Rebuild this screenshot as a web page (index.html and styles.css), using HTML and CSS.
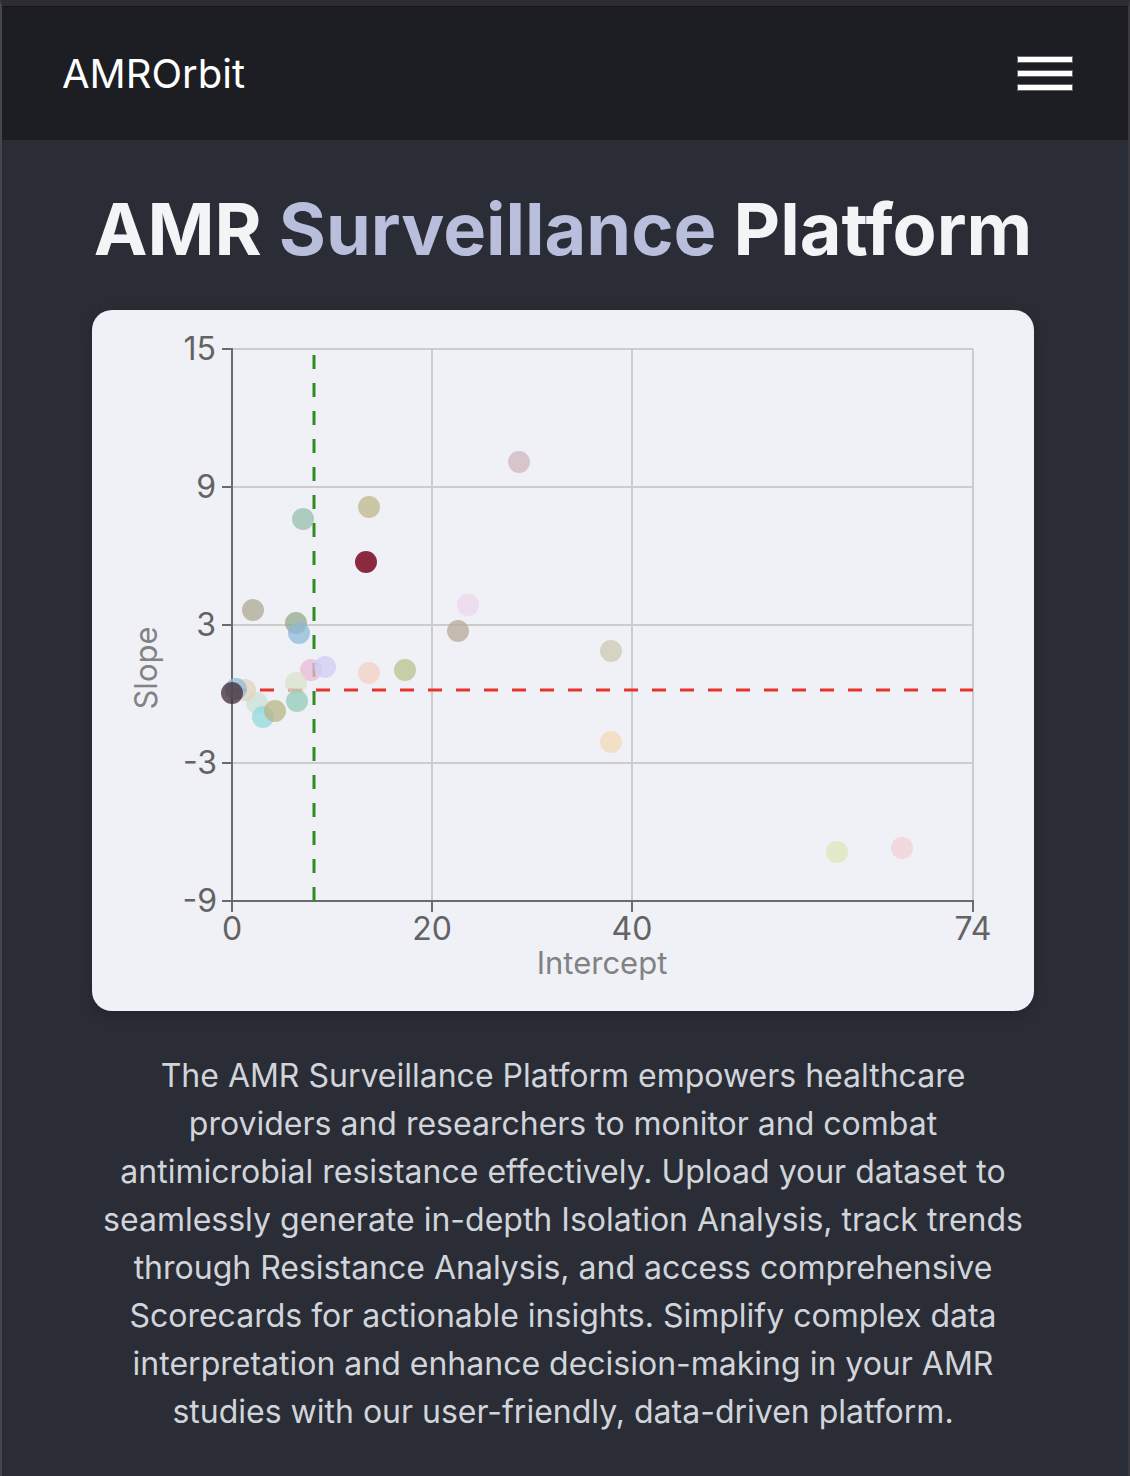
FILE: index.html
```html
<!DOCTYPE html>
<html lang="en">
<head>
<meta charset="utf-8">
<title>AMROrbit</title>
<link rel="stylesheet" href="styles.css">
</head>
<body>
<div class="frame">
  <header class="topbar">
    <span class="brand">AMROrbit</span>
    <button class="menu" aria-label="Menu"><span></span><span></span><span></span></button>
  </header>
  <main class="hero">
    <h1 class="title">AMR <span class="accent">Surveillance</span> Platform</h1>
    <div class="chart-card">
      <svg class="chart" width="942" height="701" viewBox="0 0 942 701">
        <g class="grid">
          <line x1="340" y1="39" x2="340" y2="591"/>
          <line x1="540" y1="39" x2="540" y2="591"/>
          <line x1="881" y1="39" x2="881" y2="591"/>
          <line x1="140" y1="39" x2="881" y2="39"/>
          <line x1="140" y1="177" x2="881" y2="177"/>
          <line x1="140" y1="315" x2="881" y2="315"/>
          <line x1="140" y1="453" x2="881" y2="453"/>
        </g>
        <g class="axis">
          <line x1="140" y1="38" x2="140" y2="592"/>
          <line x1="139" y1="591" x2="882" y2="591"/>
          <line x1="130" y1="39" x2="140" y2="39"/>
          <line x1="130" y1="177" x2="140" y2="177"/>
          <line x1="130" y1="315" x2="140" y2="315"/>
          <line x1="130" y1="453" x2="140" y2="453"/>
          <line x1="130" y1="591" x2="140" y2="591"/>
          <line x1="140" y1="591" x2="140" y2="602"/>
          <line x1="340" y1="591" x2="340" y2="602"/>
          <line x1="540" y1="591" x2="540" y2="602"/>
          <line x1="881" y1="591" x2="881" y2="602"/>
        </g>
        <g class="ticks-y">
          <text x="124" y="50">15</text>
          <text x="124" y="188">9</text>
          <text x="124" y="326">3</text>
          <text x="125" y="464">-3</text>
          <text x="125" y="602">-9</text>
        </g>
        <g class="ticks-x">
          <text x="140" y="630">0</text>
          <text x="340" y="630">20</text>
          <text x="540" y="630">40</text>
          <text x="881" y="630">74</text>
        </g>
        <text class="axis-label" x="510" y="664">Intercept</text>
        <text class="axis-label" transform="translate(65 358) rotate(-90)">Slope</text>
        <line class="ref-h" x1="140" y1="380" x2="881" y2="380"/>
        <line class="ref-v" x1="222" y1="591" x2="222" y2="42"/>
        <g class="points">
          <circle cx="427" cy="152" r="11" fill="#d0b6be"/>
          <circle cx="277" cy="197" r="11" fill="#bfb88b"/>
          <circle cx="211" cy="209" r="11" fill="#98beac"/>
          <circle cx="161" cy="300" r="11" fill="#acaa92"/>
          <circle cx="376" cy="295" r="11" fill="#ecd5ec"/>
          <circle cx="204" cy="313" r="11" fill="#91a98a"/>
          <circle cx="207" cy="323" r="11" fill="#8db9d8"/>
          <circle cx="366" cy="321" r="11" fill="#b7a997"/>
          <circle cx="519" cy="341" r="11" fill="#ccc9b3"/>
          <circle cx="313" cy="360" r="11" fill="#b8c18e"/>
          <circle cx="277" cy="363" r="11" fill="#f1d0c3"/>
          <circle cx="219" cy="360" r="11" fill="#ebbad7"/>
          <circle cx="233" cy="357" r="11" fill="#d0ccf4"/>
          <circle cx="204" cy="373" r="11" fill="#d9e1ca"/>
          <circle cx="205" cy="391" r="11" fill="#91cab8"/>
          <circle cx="165" cy="393" r="11" fill="#c9e2d4"/>
          <circle cx="171" cy="407" r="11" fill="#91dadc"/>
          <circle cx="183" cy="401" r="11" fill="#b7b586"/>
          <circle cx="153" cy="380" r="11" fill="#e3d2bc"/>
          <circle cx="144" cy="379" r="11" fill="#8fbdd8"/>
          <circle cx="140" cy="383" r="11" fill="#3f2932"/>
          <circle cx="519" cy="432" r="11" fill="#f3d9b6"/>
          <circle cx="745" cy="542" r="11" fill="#dde5b8"/>
          <circle cx="810" cy="538" r="11" fill="#f1d0d4"/>
          <circle class="focus" cx="274" cy="252" r="11" fill="#8b2a3f"/>
        </g>
      </svg>
    </div>
    <p class="intro">The AMR Surveillance Platform empowers healthcare providers and researchers to monitor and combat antimicrobial resistance effectively. Upload your dataset to seamlessly generate in-depth Isolation Analysis, track trends through Resistance Analysis, and access comprehensive Scorecards for actionable insights. Simplify complex data interpretation and enhance decision-making in your AMR studies with our user-friendly, data-driven platform.</p>
  </main>
</div>
</body>
</html>
```

FILE: styles.css
```css
html, body {
  margin: 0;
  padding: 0;
  background: #2a2d35;
}

.frame {
  box-sizing: border-box;
  min-height: 1476px;
  border-top: 6px solid #2d2c35;
  border-left: 2px solid #45454b;
  border-right: 2px solid #3a3a40;
  background: #2a2d35;
  font-family: Inter, "Noto Sans", sans-serif;
}

.topbar {
  box-sizing: border-box;
  height: 134px;
  border-top: 1px solid #141518;
  background: #1c1e23;
  display: flex;
  align-items: center;
  justify-content: space-between;
  padding: 0 56px 0 60px;
}

.brand {
  color: #ffffff;
  font-size: 40px;
  font-weight: 400;
}

.menu {
  display: flex;
  flex-direction: column;
  gap: 9px;
  padding: 0;
  margin: 0;
  border: 0;
  background: transparent;
  cursor: pointer;
}

.menu span {
  display: block;
  width: 54px;
  height: 5px;
  background: #ffffff;
  box-shadow: 0 0 0 1px rgba(150, 150, 155, 0.6);
}

.hero {
  display: flex;
  flex-direction: column;
  align-items: center;
  padding: 53px 4px 0 0;
}

.title {
  margin: 0;
  font-size: 72px;
  line-height: 72px;
  font-weight: 700;
  color: #f3f4f6;
  white-space: nowrap;
}

.accent {
  color: #b9bedc;
}

.chart-card {
  margin-top: 45px;
  width: 942px;
  height: 701px;
  border-radius: 20px;
  background: #f0f1f7;
  box-shadow: 0 4px 14px rgba(0, 0, 0, 0.18);
  overflow: hidden;
}

.chart {
  display: block;
  font-family: Inter, "Noto Sans", sans-serif;
}

.grid line {
  stroke: #cccccc;
  stroke-width: 2;
}

.axis line {
  stroke: #6b6b6b;
  stroke-width: 2;
}

.ticks-y text,
.ticks-x text {
  font-size: 32px;
  fill: #636363;
}

.ticks-y text {
  text-anchor: end;
}

.ticks-x text {
  text-anchor: middle;
}

.axis-label {
  font-size: 31px;
  fill: #828282;
  text-anchor: middle;
}

.ref-h {
  stroke: #e5342b;
  stroke-width: 3;
  stroke-dasharray: 14 14;
}

.ref-v {
  stroke: #2f8c22;
  stroke-width: 3;
  stroke-dasharray: 14 14;
}

.points circle {
  opacity: 0.75;
}

.points circle.focus {
  opacity: 1;
}

.intro {
  margin: 41px 0 0 0;
  width: 942px;
  text-align: center;
  font-size: 32px;
  line-height: 48px;
  color: #d1d5db;
}
```
